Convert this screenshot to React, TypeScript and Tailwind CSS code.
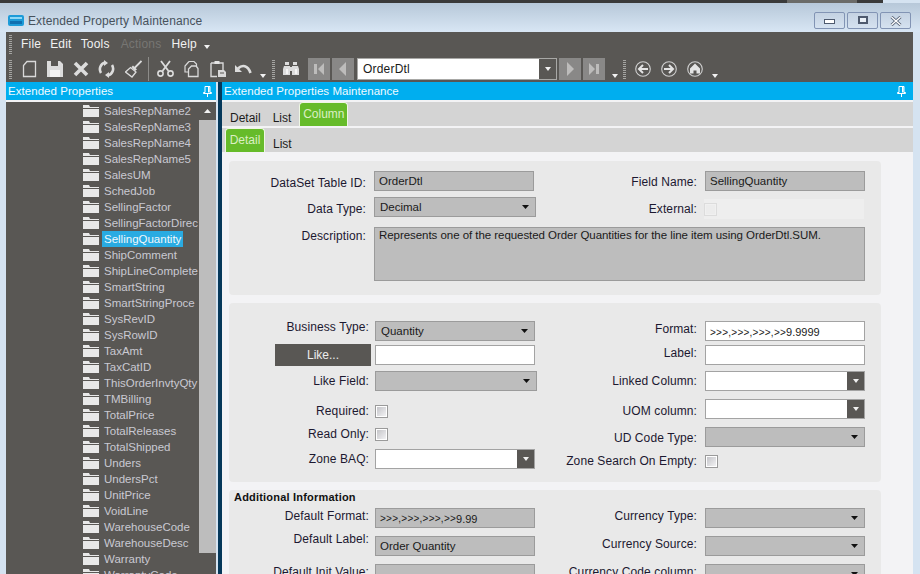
import type { ReactNode } from "react";

const treeItems = [
  "SalesRepName2", "SalesRepName3", "SalesRepName4", "SalesRepName5", "SalesUM", "SchedJob",
  "SellingFactor", "SellingFactorDirec", "SellingQuantity", "ShipComment", "ShipLineComplete",
  "SmartString", "SmartStringProce", "SysRevID", "SysRowID", "TaxAmt", "TaxCatID",
  "ThisOrderInvtyQty", "TMBilling", "TotalPrice", "TotalReleases", "TotalShipped", "Unders",
  "UndersPct", "UnitPrice", "VoidLine", "WarehouseCode", "WarehouseDesc", "Warranty", "WarrantyCode",
];

function Ico({ w, cls = "", children }: { w: number; cls?: string; children: ReactNode }) {
  return (
    <svg width={w} height={18} viewBox={`0 0 ${w} 18`} className={`shrink-0 ${cls}`} fill="none">
      {children}
    </svg>
  );
}

function Grip({ cls = "" }: { cls?: string }) {
  return <div className={`w-[3px] h-[19px] shrink-0 bg-[repeating-linear-gradient(to_bottom,#a5a5a2_0,#a5a5a2_1px,transparent_1px,transparent_2px)] ${cls}`} />;
}

function MiniArrow({ cls = "" }: { cls?: string }) {
  return (
    <svg width={6} height={4} viewBox="0 0 6 4" className={`shrink-0 ${cls}`}>
      <path d="M0 0H6L3 4Z" fill="#f2f2f2" />
    </svg>
  );
}

function Pin() {
  return (
    <svg width={9} height={11} viewBox="0 0 9 11" className="shrink-0">
      <path d="M2 .5H7V6.5H8.5V7.5H.5V6.5H2ZM4.5 7.5V11" stroke="#fff" fill="none" />
      <path d="M5 1H6.5V6.5H5Z" fill="#fff" />
    </svg>
  );
}

function NavBtn({ cls = "", children }: { cls?: string; children: ReactNode }) {
  return (
    <div className={`w-[22px] h-[22px] shrink-0 bg-[#898887] flex items-center justify-center ${cls}`}>
      <svg width={14} height={14} viewBox="0 0 14 14">
        {children}
      </svg>
    </div>
  );
}

function Folder() {
  return (
    <svg width={16} height={12} viewBox="0 0 16 12" className="shrink-0">
      <path d="M0 0H6L7 2H16V3H0Z" fill="#e8e8e8" />
      <path d="M0 4H16V12H0Z" fill="#e8e8e8" />
    </svg>
  );
}

function Field({ label, width = "w-[140px]", lift = "", children, cls = "" }: {
  label: string;
  width?: string;
  lift?: string;
  cls?: string;
  children: ReactNode;
}) {
  return (
    <div className={`flex items-center h-[20px] gap-2 ${cls}`}>
      <div className={`${width} shrink-0 text-right text-[12px] tracking-[0.1px] text-[#1c1830] whitespace-nowrap ${lift}`}>{label}</div>
      {children}
    </div>
  );
}

function ReadBox({ w = "w-[160px]", children }: { w?: string; children?: ReactNode }) {
  return (
    <div className={`${w} h-[20px] bg-[#bdbdbd] border border-[#9b9b9b] px-[4px] pt-[2px] flex items-center text-[11.5px] leading-none text-[#1a1a1a] whitespace-nowrap`}>
      {children}
    </div>
  );
}

function GrayCombo({ w = "w-[160px]", children }: { w?: string; children?: ReactNode }) {
  return (
    <div className={`${w} h-[20px] bg-[#bdbdbd] border border-[#9b9b9b] pl-[5px] pr-[6px] flex items-center justify-between text-[11.5px] text-[#1a1a1a]`}>
      <span className="pt-[2px]">{children}</span>
      <svg width={7} height={4} viewBox="0 0 7 4"><path d="M0 0H7L3.5 4Z" fill="#111" /></svg>
    </div>
  );
}

function WhiteBox({ children }: { children?: ReactNode }) {
  return (
    <div className="w-[160px] h-[20px] bg-white border border-[#a3a3a3] px-[4px] pt-[2px] flex items-center text-[11.5px] text-[#1a1a1a] whitespace-nowrap">
      {children}
    </div>
  );
}

function LookupBox() {
  return (
    <div className="w-[160px] h-[20px] bg-white border border-[#a3a3a3] flex justify-end">
      <div className="w-[17px] bg-[#595754] flex items-center justify-center">
        <svg width={6} height={4} viewBox="0 0 6 4"><path d="M0 0H6L3 4Z" fill="#f0f0f0" /></svg>
      </div>
    </div>
  );
}

function Check({ disabled = false }: { disabled?: boolean }) {
  return (
    <div className={`w-[13px] h-[13px] border p-px ${disabled ? "border-[#dcdcdc] bg-[#f0f0f0]" : "border-[#9a9a9a] bg-white"}`}>
      <div className={`w-full h-full ${disabled ? "bg-[#ececec]" : "bg-gradient-to-br from-[#c4c4c8] to-[#f2f2f4]"}`} />
    </div>
  );
}

function Chevrons() {
  return <span className="text-[10px] tracking-[0.25px]">{">>>,>>>,>>>,>>"}</span>;
}

export default function App() {
  return (
    <div className="w-[920px] h-[574px] overflow-hidden flex flex-col bg-[#d5e3f1] font-['Liberation_Sans',Arial,sans-serif]">
      <div className="h-[3px] shrink-0 bg-[#3a3a3a] flex">
        <div className="ml-[787px] w-[70px] bg-[#6b6b68]" />
        <div className="ml-auto w-[37px] bg-[#d5e3f1]" />
      </div>
      {/* window caption */}
      <div className="h-[29px] shrink-0 flex items-center bg-gradient-to-b from-[#b7c8d9] to-[#d8e6f4] pl-[8px] pr-[9px]">
        <svg width={16} height={13} viewBox="0 0 16 13" className="shrink-0 mt-[5px]">
          <rect x="0" y="1" width="16" height="11" rx="2" fill="#1d9bd8" />
          <rect x="2" y="3" width="12" height="2" fill="#8fd8f5" />
          <rect x="2" y="7" width="12" height="3" fill="#0f6fb0" />
        </svg>
        <span className="ml-[4px] mt-[7px] text-[12px] tracking-[0.1px] text-[#47525c]">Extended Property Maintenance</span>
        <div className="ml-auto flex gap-[2px] mt-[6px]">
          <div className="w-[31px] h-[17px] rounded-[2px] border border-[#8294b4] bg-gradient-to-b from-[#c4d2e2] to-[#d5e2f0] flex items-center justify-center">
            <div className="w-[11px] h-[5px] bg-white border border-[#4e5a6e] mt-[2px]" />
          </div>
          <div className="w-[31px] h-[17px] rounded-[2px] border border-[#8294b4] bg-gradient-to-b from-[#c4d2e2] to-[#d5e2f0] flex items-center justify-center">
            <div className="w-[10px] h-[8px] border-2 border-[#4e5a6e] bg-[#e9f0f7] mb-[1px]" />
          </div>
          <div className="w-[31px] h-[17px] rounded-[2px] border border-[#8294b4] bg-gradient-to-b from-[#c4d2e2] to-[#d5e2f0] flex items-center justify-center">
            <svg width={12} height={10} viewBox="0 0 12 10"><path d="M1.5 1L10.5 9M10.5 1L1.5 9" stroke="#4e5a6e" strokeWidth="3" /><path d="M1.5 1L10.5 9M10.5 1L1.5 9" stroke="#fff" strokeWidth="1.4" /></svg>
          </div>
        </div>
      </div>

      <div className="flex-1 min-h-0 flex flex-col ml-[6px] mr-[7px]">
        {/* menu */}
        <div className="h-[24px] shrink-0 bg-[#595754] flex items-center text-[12px] tracking-[0.2px] text-[#f2f2f2]">
          <Grip cls="ml-[3px] h-[15px]" />
          <span className="ml-[9px]">File</span>
          <span className="ml-[9px]">Edit</span>
          <span className="ml-[9px]">Tools</span>
          <span className="ml-[11px] text-[#777673]">Actions</span>
          <span className="ml-[10px]">Help</span>
          <MiniArrow cls="ml-[7px] mt-[6px]" />
        </div>

        {/* toolbar */}
        <div className="h-[26px] shrink-0 bg-[#595754] flex items-center">
          <Grip cls="ml-[3px]" />
          <Ico w={15} cls="ml-[10px]">
            <path d="M5 1.5H13.5V16.5H1.5V5.5Z" stroke="#d9d9d9" strokeWidth="1.3" />
          </Ico>
          <Ico w={16} cls="ml-[10px]">
            <path d="M0 1H13L16 4V17H0Z" fill="#dcdcdc" />
            <path d="M4 1H11V6H4Z" fill="#595754" />
            <path d="M3 10H13V17H3Z" fill="#f4f4f4" />
          </Ico>
          <Ico w={16} cls="ml-[10px]">
            <path d="M2 3L14 15M14 3L2 15" stroke="#dcdcdc" strokeWidth="3.6" />
          </Ico>
          <Ico w={17} cls="ml-[9px]">
            <path d="M3 13A7 7 0 0 1 7 2.5M14 5A7 7 0 0 1 10 15.5" stroke="#dcdcdc" strokeWidth="2.6" />
            <path d="M6 0V6L10 3ZM11 12V18L7 15Z" fill="#dcdcdc" />
          </Ico>
          <Ico w={17} cls="ml-[10px]">
            <path d="M16.5 1L9.5 8" stroke="#dcdcdc" strokeWidth="1.8" />
            <path d="M8 5.5L12 9.5L10 11L6.5 7Z" fill="#dcdcdc" />
            <path d="M5.5 7.5L11 12L7 17L0.5 12Z" stroke="#dcdcdc" strokeWidth="1.3" fill="#595754" />
          </Ico>
          <div className="w-px h-[24px] bg-[#8d8c89] ml-[6px] shrink-0" />
          <Ico w={17} cls="ml-[8px]">
            <path d="M4 1L11.5 11M13 1L5.5 11" stroke="#dcdcdc" strokeWidth="1.8" />
            <circle cx="3.5" cy="13.5" r="2.6" stroke="#dcdcdc" strokeWidth="1.6" />
            <circle cx="13.5" cy="13.5" r="2.6" stroke="#dcdcdc" strokeWidth="1.6" />
          </Ico>
          <Ico w={15} cls="ml-[10px]">
            <path d="M5 1.5H10L12.5 4V8" stroke="#d9d9d9" strokeWidth="1.2" />
            <path d="M5 1.5L1 6V12H4" stroke="#d9d9d9" strokeWidth="1.2" />
            <path d="M7.5 6H12L14 8.5V16.5H4.5V9Z" stroke="#d9d9d9" strokeWidth="1.3" fill="#595754" />
          </Ico>
          <Ico w={16} cls="ml-[11px]">
            <path d="M1 3H13V10M1 3V16.5H7" stroke="#d9d9d9" strokeWidth="1.4" />
            <path d="M4.5 1H9.5V4H4.5Z" fill="#e4e4e4" />
            <path d="M8 10H14L16 12V17H8Z" fill="#d9d9d9" />
            <path d="M10 13H14" stroke="#595754" />
          </Ico>
          <Ico w={17} cls="ml-[9px]">
            <path d="M3 8.5C7 4.5 13 5 15.5 13" stroke="#dcdcdc" strokeWidth="2.6" />
            <path d="M0 5V12H7Z" fill="#dcdcdc" />
          </Ico>
          <MiniArrow cls="ml-[8px] mt-[13px]" />
          <Grip cls="ml-[6px]" />
          <Ico w={16} cls="ml-[8px]">
            <path d="M2 2H6V5H2ZM10 2H14V5H10Z" fill="#dcdcdc" />
            <path d="M1 6H7V15H0V9ZM9 6H15L16 9V15H9Z" fill="#dcdcdc" />
            <path d="M7 7H9V11H7Z" fill="#dcdcdc" />
            <path d="M3 9H5V14H3ZM12 9H14V14H12Z" fill="#f4f4f4" />
          </Ico>
          <NavBtn cls="ml-[9px]">
            <path d="M2 2H5V12H2ZM12 1V13L6 7Z" fill="#bdbcbb" />
          </NavBtn>
          <NavBtn cls="ml-[2px]">
            <path d="M10 0V14L3 7Z" fill="#bdbcbb" />
          </NavBtn>
          <div className="w-[200px] h-[22px] ml-[3px] shrink-0 border border-[#a8a8a6] bg-white flex">
            <span className="flex-1 pl-[5px] text-[12px] leading-[20px] tracking-[0.2px] text-[#1a1a1a]">OrderDtl</span>
            <div className="w-[17px] bg-[#595754] flex items-center justify-center">
              <MiniArrow />
            </div>
          </div>
          <NavBtn cls="ml-[2px]">
            <path d="M4 0V14L11 7Z" fill="#bdbcbb" />
          </NavBtn>
          <NavBtn cls="ml-[2px]">
            <path d="M2 1V13L8 7ZM9 2H12V12H9Z" fill="#bdbcbb" />
          </NavBtn>
          <MiniArrow cls="ml-[7px] mt-[13px]" />
          <Grip cls="ml-[5px]" />
          <Ico w={16} cls="ml-[9px]">
            <circle cx="8" cy="9" r="7.3" stroke="#cfcfcf" strokeWidth="1.1" />
            <path d="M13 9H5M8 5L4 9L8 13" stroke="#e4e4e4" strokeWidth="2" />
          </Ico>
          <Ico w={16} cls="ml-[10px]">
            <circle cx="8" cy="9" r="7.3" stroke="#cfcfcf" strokeWidth="1.1" />
            <path d="M3 9H11M8 5L12 9L8 13" stroke="#e4e4e4" strokeWidth="2" />
          </Ico>
          <Ico w={16} cls="ml-[10px]">
            <circle cx="8" cy="9" r="7.3" stroke="#cfcfcf" strokeWidth="1.1" />
            <path d="M8 3.5L13 8.5V13.5H9.5V10.5H6.5V13.5H3V8.5Z" fill="#e4e4e4" />
          </Ico>
          <MiniArrow cls="ml-[9px] mt-[13px]" />
        </div>

        <div className="flex-1 min-h-0 flex">
          {/* left dock */}
          <div className="w-[210px] shrink-0 flex flex-col">
            <div className="h-[18px] shrink-0 bg-[#00aeef] flex items-center justify-between pl-[2px] pr-[4px] text-[11.5px] tracking-[0.05px] text-[#f0fbff]">
              <span className="pt-[2px]">Extended Properties</span>
              <Pin />
            </div>
            <div className="h-[2px] shrink-0 bg-[#f3f3f5]" />
            <div className="flex-1 min-h-0 flex bg-[#595754]">
              <div className="flex-1 min-w-0 overflow-hidden pt-px pl-[77px]">
                {treeItems.map((name) => (
                  <div key={name} className="h-[16px] flex items-center">
                    <Folder />
                    <span className={`ml-[3px] px-[2px] text-[11.5px] leading-[16px] whitespace-nowrap ${name === "SellingQuantity" ? "bg-[#29abe2] text-[#f0f8fc]" : "text-[#c9c9d2]"}`}>
                      {name}
                    </span>
                  </div>
                ))}
              </div>
              <div className="w-[17px] shrink-0 flex flex-col">
                <div className="h-[18px] flex items-center justify-center">
                  <svg width={7} height={4} viewBox="0 0 7 4"><path d="M0 4H7L3.5 0Z" fill="#f2f2f2" /></svg>
                </div>
                <div className="h-[433px] bg-[#bdbdbd]" />
              </div>
            </div>
          </div>
          <div className="w-[6px] shrink-0 border-l-2 border-[#d5e3f1] bg-[#05385a]" />

          {/* main dock */}
          <div className="flex-1 min-w-0 flex flex-col">
            <div className="h-[18px] shrink-0 bg-[#00aeef] flex items-center justify-between pl-[2px] pr-[7px] text-[11.5px] tracking-[0.05px] text-[#f0fbff]">
              <span className="pt-[2px]">Extended Properties Maintenance</span>
              <Pin />
            </div>
            <div className="h-[2px] shrink-0 bg-[#f3f3f5]" />
            <div className="h-[24px] shrink-0 bg-[#d4d4d4] flex text-[12px] text-[#1c1c1c]">
              <span className="ml-[8px] mt-[7px]">Detail</span>
              <span className="ml-[12px] mt-[7px]">List</span>
              <div className="ml-[8px] w-[49px] rounded-t-[4px] border border-b-0 border-[#eef6e4] bg-[#66bb2a] text-center text-[#dcefc4] leading-[22px]">Column</div>
            </div>
            <div className="h-[2px] shrink-0 bg-[#f3f3f5]" />
            <div className="h-[24px] shrink-0 bg-[#d4d4d4] flex text-[12px] text-[#1c1c1c]">
              <div className="ml-[3px] w-[40px] rounded-t-[4px] border border-b-0 border-[#eef6e4] bg-[#66bb2a] text-center text-[#dcefc4] leading-[22px]">Detail</div>
              <span className="ml-[8px] mt-[7px]">List</span>
            </div>

            <div className="flex-1 min-h-0 overflow-hidden bg-[#f3f3f5] pt-[9px] pl-[7px] pr-[32px] flex flex-col gap-[8px]">
              {/* column ids */}
              <div className="h-[134px] shrink-0 rounded-[4px] bg-[#e9e9e9] pt-[10px]">
                <div className="flex">
                  <div className="w-[310px] shrink-0 flex flex-col gap-[6px]">
                    <Field label="DataSet Table ID:" width="w-[137px]" lift="pt-[4px]"><ReadBox>OrderDtl</ReadBox></Field>
                    <Field label="Data Type:" width="w-[137px]" lift="pt-[4px]"><GrayCombo w="w-[162px]">Decimal</GrayCombo></Field>
                  </div>
                  <div className="flex-1 flex flex-col gap-[6px]">
                    <Field label="Field Name:" width="w-[158px]" lift="pt-[2px]"><ReadBox>SellingQuantity</ReadBox></Field>
                    <div className="mt-[2px]">
                      <Field label="External:" width="w-[158px]">
                        <div className="w-[160px] h-[20px] bg-[#eeeeee] flex items-center -ml-px">
                          <Check disabled />
                        </div>
                      </Field>
                    </div>
                  </div>
                </div>
                <div className="mt-[8px] flex gap-2">
                  <div className="w-[137px] shrink-0 text-right text-[12px] tracking-[0.1px] text-[#1c1830]">Description:</div>
                  <div className="w-[491px] h-[54px] bg-[#bdbdbd] border border-[#9b9b9b] px-[4px] text-[11.5px] leading-[14px] tracking-[-0.05px] text-[#1a1a1a] whitespace-nowrap">
                    Represents one of the requested Order Quantities for the line item using OrderDtl.SUM.
                  </div>
                </div>
              </div>

              {/* business type etc */}
              <div className="h-[179px] shrink-0 rounded-[4px] bg-[#e9e9e9] pt-[18px] flex">
                <div className="w-[310px] shrink-0 flex flex-col">
                  <Field label="Business Type:" lift="pb-[8px] -mr-[2px]"><GrayCombo>Quantity</GrayCombo></Field>
                  <div className="mt-[4px] flex items-center h-[20px] gap-[4px]">
                    <div className="ml-[46px] w-[96px] h-[22px] bg-[#595754] text-center text-[12px] leading-[22px] text-[#ececec]">Like...</div>
                    <WhiteBox />
                  </div>
                  <Field label="Like Field:" lift="-mr-[2px]" cls="mt-[6px]"><GrayCombo w="w-[162px]" /></Field>
                  <Field label="Required:" lift="-mr-[2px]" cls="mt-[10px]"><Check /></Field>
                  <Field label="Read Only:" lift="-mr-[2px]" cls="mt-[3px]"><Check /></Field>
                  <Field label="Zone BAQ:" lift="-mr-[2px]" cls="mt-[5px]"><LookupBox /></Field>
                </div>
                <div className="flex-1 flex flex-col">
                  <Field label="Format:" width="w-[158px]" lift="pb-[4px]">
                    <WhiteBox><Chevrons /><span className="text-[11px]">9.9999</span></WhiteBox>
                  </Field>
                  <Field label="Label:" width="w-[158px]" lift="pb-[4px]" cls="mt-[4px]"><WhiteBox /></Field>
                  <Field label="Linked Column:" width="w-[158px]" cls="mt-[6px]"><LookupBox /></Field>
                  <Field label="UOM column:" width="w-[158px]" lift="pt-[4px]" cls="mt-[8px]"><LookupBox /></Field>
                  <Field label="UD Code Type:" width="w-[158px]" lift="pt-[2px]" cls="mt-[8px]"><GrayCombo /></Field>
                  <Field label="Zone Search On Empty:" width="w-[158px]" cls="mt-[4px]"><Check /></Field>
                </div>
              </div>

              {/* additional information */}
              <div className="h-[100px] shrink-0 rounded-[4px] bg-[#e9e9e9]">
                <div className="pl-[5px] h-[18px] text-[11px] leading-[14px] font-bold tracking-[0.2px] text-[#111]">Additional Information</div>
                <div className="flex">
                  <div className="w-[310px] shrink-0 flex flex-col gap-[8px]">
                    <Field label="Default Format:" lift="pb-[4px] -mr-[2px]">
                      <ReadBox><Chevrons /><span className="text-[11px]">9.99</span></ReadBox>
                    </Field>
                    <Field label="Default Label:" lift="pb-[14px] -mr-[2px]"><ReadBox>Order Quantity</ReadBox></Field>
                    <Field label="Default Init Value:" lift="pb-[4px] -mr-[2px]"><ReadBox /></Field>
                  </div>
                  <div className="flex-1 flex flex-col gap-[8px]">
                    <Field label="Currency Type:" width="w-[158px]" lift="pb-[4px]"><GrayCombo /></Field>
                    <Field label="Currency Source:" width="w-[158px]" lift="pb-[4px]"><GrayCombo /></Field>
                    <Field label="Currency Code column:" width="w-[158px]" lift="pb-[4px]"><GrayCombo /></Field>
                  </div>
                </div>
              </div>
            </div>
          </div>
        </div>
      </div>
    </div>
  );
}
